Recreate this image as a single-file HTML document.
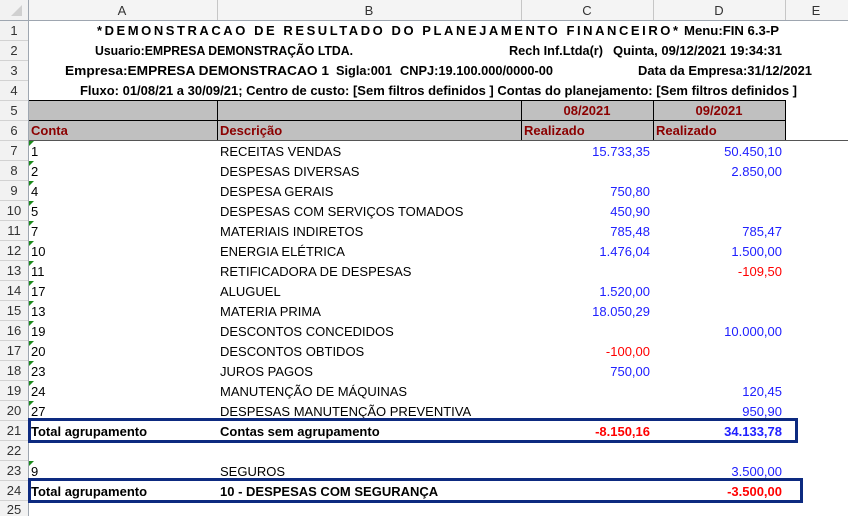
<!DOCTYPE html>
<html><head><meta charset="utf-8"><style>
html,body{margin:0;padding:0;background:#fff;width:848px;height:516px;overflow:hidden}
svg{display:block}
text{font-family:"Liberation Sans",Arial,sans-serif;font-size:13px}
.b{font-weight:bold}
.dr{fill:#8b0000;font-weight:bold}
.bl{fill:#2020ff}
.rd{fill:#ff0000}
.rn{fill:#333;font-size:13px}
</style></head><body>
<svg width="848" height="516" viewBox="0 0 848 516" xmlns="http://www.w3.org/2000/svg">
<rect x="0" y="0" width="848" height="20" fill="#f4f4f4"/>
<rect x="0" y="0" width="28" height="516" fill="#f2f2f2"/>
<line x1="0" y1="20.5" x2="848" y2="20.5" stroke="#9ea6b0"/>
<line x1="28.5" y1="0" x2="28.5" y2="516" stroke="#9ea6b0"/>
<g stroke="#c6c6c6">
<line x1="217.5" y1="0" x2="217.5" y2="20"/><line x1="521.5" y1="0" x2="521.5" y2="20"/><line x1="653.5" y1="0" x2="653.5" y2="20"/><line x1="785.5" y1="0" x2="785.5" y2="20"/>
</g>
<polygon points="22,5 22,16 11,16" fill="#d0d0d0"/>
<g fill="#333" text-anchor="middle">
<text x="122" y="15">A</text><text x="369" y="15">B</text><text x="587" y="15">C</text><text x="719" y="15">D</text><text x="816" y="15">E</text>
</g>
<g stroke="#d2d2d2">
<line x1="0" y1="40.5" x2="28" y2="40.5"/><line x1="0" y1="60.5" x2="28" y2="60.5"/><line x1="0" y1="80.5" x2="28" y2="80.5"/><line x1="0" y1="100.5" x2="28" y2="100.5"/><line x1="0" y1="120.5" x2="28" y2="120.5"/><line x1="0" y1="140.5" x2="28" y2="140.5"/><line x1="0" y1="160.5" x2="28" y2="160.5"/><line x1="0" y1="180.5" x2="28" y2="180.5"/><line x1="0" y1="200.5" x2="28" y2="200.5"/><line x1="0" y1="220.5" x2="28" y2="220.5"/><line x1="0" y1="240.5" x2="28" y2="240.5"/><line x1="0" y1="260.5" x2="28" y2="260.5"/><line x1="0" y1="280.5" x2="28" y2="280.5"/><line x1="0" y1="300.5" x2="28" y2="300.5"/><line x1="0" y1="320.5" x2="28" y2="320.5"/><line x1="0" y1="340.5" x2="28" y2="340.5"/><line x1="0" y1="360.5" x2="28" y2="360.5"/><line x1="0" y1="380.5" x2="28" y2="380.5"/><line x1="0" y1="400.5" x2="28" y2="400.5"/><line x1="0" y1="420.5" x2="28" y2="420.5"/><line x1="0" y1="440.5" x2="28" y2="440.5"/><line x1="0" y1="460.5" x2="28" y2="460.5"/><line x1="0" y1="480.5" x2="28" y2="480.5"/><line x1="0" y1="500.5" x2="28" y2="500.5"/>
</g>
<g class="rn" text-anchor="middle">
<text x="14" y="35">1</text><text x="14" y="55">2</text><text x="14" y="75">3</text><text x="14" y="95">4</text><text x="14" y="115">5</text><text x="14" y="135">6</text><text x="14" y="155">7</text><text x="14" y="175">8</text><text x="14" y="195">9</text><text x="14" y="215">10</text><text x="14" y="235">11</text><text x="14" y="255">12</text><text x="14" y="275">13</text><text x="14" y="295">14</text><text x="14" y="315">15</text><text x="14" y="335">16</text><text x="14" y="355">17</text><text x="14" y="375">18</text><text x="14" y="395">19</text><text x="14" y="415">20</text><text x="14" y="435">21</text><text x="14" y="455">22</text><text x="14" y="475">23</text><text x="14" y="495">24</text><text x="14" y="514">25</text>
</g>
<g class="b">
<text x="97" y="35" textLength="581" lengthAdjust="spacing">*DEMONSTRACAO DE RESULTADO DO PLANEJAMENTO FINANCEIRO*</text>
<text x="684" y="35" textLength="95" lengthAdjust="spacingAndGlyphs">Menu:FIN 6.3-P</text>
<text x="95" y="55" textLength="258" lengthAdjust="spacingAndGlyphs">Usuario:EMPRESA DEMONSTRAÇÃO LTDA.</text>
<text x="509" y="55" textLength="94" lengthAdjust="spacingAndGlyphs">Rech Inf.Ltda(r)</text>
<text x="613" y="55" textLength="169" lengthAdjust="spacingAndGlyphs">Quinta, 09/12/2021 19:34:31</text>
<text x="65" y="75" textLength="264" lengthAdjust="spacingAndGlyphs">Empresa:EMPRESA DEMONSTRACAO 1</text>
<text x="336" y="75" textLength="56" lengthAdjust="spacingAndGlyphs">Sigla:001</text>
<text x="400" y="75" textLength="153" lengthAdjust="spacingAndGlyphs">CNPJ:19.100.000/0000-00</text>
<text x="638" y="75" textLength="174" lengthAdjust="spacingAndGlyphs">Data da Empresa:31/12/2021</text>
<text x="80" y="95" textLength="717" lengthAdjust="spacingAndGlyphs">Fluxo: 01/08/21 a 30/09/21; Centro de custo: [Sem filtros definidos ] Contas do planejamento: [Sem filtros definidos ]</text>
</g>
<rect x="29" y="100" width="756" height="40" fill="#c0c0c0"/>
<g stroke="#000" fill="none">
<line x1="29" y1="100.5" x2="785" y2="100.5"/>
<line x1="29" y1="120.5" x2="785" y2="120.5"/>
<line x1="217.5" y1="100" x2="217.5" y2="140"/>
<line x1="521.5" y1="100" x2="521.5" y2="140"/>
<line x1="653.5" y1="100" x2="653.5" y2="140"/>
<line x1="785.5" y1="100" x2="785.5" y2="140"/>
</g>
<line x1="29" y1="140.5" x2="848" y2="140.5" stroke="#555"/>
<text class="dr" x="587" y="115" text-anchor="middle">08/2021</text>
<text class="dr" x="719" y="115" text-anchor="middle">09/2021</text>
<text class="dr" x="31" y="135">Conta</text>
<text class="dr" x="220" y="135">Descrição</text>
<text class="dr" x="524" y="135">Realizado</text>
<text class="dr" x="656" y="135">Realizado</text>
<g fill="#1a8a1a">
<polygon points="29,141 34,141 29,146"/><polygon points="29,161 34,161 29,166"/><polygon points="29,181 34,181 29,186"/><polygon points="29,201 34,201 29,206"/><polygon points="29,221 34,221 29,226"/><polygon points="29,241 34,241 29,246"/><polygon points="29,261 34,261 29,266"/><polygon points="29,281 34,281 29,286"/><polygon points="29,301 34,301 29,306"/><polygon points="29,321 34,321 29,326"/><polygon points="29,341 34,341 29,346"/><polygon points="29,361 34,361 29,366"/><polygon points="29,381 34,381 29,386"/><polygon points="29,401 34,401 29,406"/><polygon points="29,461 34,461 29,466"/>
</g>
<g>
<text x="31" y="156">1</text><text x="220" y="156">RECEITAS VENDAS</text>
<text x="31" y="176">2</text><text x="220" y="176">DESPESAS DIVERSAS</text>
<text x="31" y="196">4</text><text x="220" y="196">DESPESA GERAIS</text>
<text x="31" y="216">5</text><text x="220" y="216">DESPESAS COM SERVIÇOS TOMADOS</text>
<text x="31" y="236">7</text><text x="220" y="236">MATERIAIS INDIRETOS</text>
<text x="31" y="256">10</text><text x="220" y="256">ENERGIA ELÉTRICA</text>
<text x="31" y="276">11</text><text x="220" y="276">RETIFICADORA DE DESPESAS</text>
<text x="31" y="296">17</text><text x="220" y="296">ALUGUEL</text>
<text x="31" y="316">13</text><text x="220" y="316">MATERIA PRIMA</text>
<text x="31" y="336">19</text><text x="220" y="336">DESCONTOS CONCEDIDOS</text>
<text x="31" y="356">20</text><text x="220" y="356">DESCONTOS OBTIDOS</text>
<text x="31" y="376">23</text><text x="220" y="376">JUROS PAGOS</text>
<text x="31" y="396">24</text><text x="220" y="396">MANUTENÇÃO DE MÁQUINAS</text>
<text x="31" y="416">27</text><text x="220" y="416">DESPESAS MANUTENÇÃO PREVENTIVA</text>
<text x="31" y="476">9</text><text x="220" y="476">SEGUROS</text>
</g>
<g text-anchor="end">
<text class="bl" x="650" y="156">15.733,35</text><text class="bl" x="782" y="156">50.450,10</text>
<text class="bl" x="782" y="176">2.850,00</text>
<text class="bl" x="650" y="196">750,80</text>
<text class="bl" x="650" y="216">450,90</text>
<text class="bl" x="650" y="236">785,48</text><text class="bl" x="782" y="236">785,47</text>
<text class="bl" x="650" y="256">1.476,04</text><text class="bl" x="782" y="256">1.500,00</text>
<text class="rd" x="782" y="276">-109,50</text>
<text class="bl" x="650" y="296">1.520,00</text>
<text class="bl" x="650" y="316">18.050,29</text>
<text class="bl" x="782" y="336">10.000,00</text>
<text class="rd" x="650" y="356">-100,00</text>
<text class="bl" x="650" y="376">750,00</text>
<text class="bl" x="782" y="396">120,45</text>
<text class="bl" x="782" y="416">950,90</text>
<text class="bl" x="782" y="476">3.500,00</text>
</g>
<g class="b">
<text x="31" y="436">Total agrupamento</text><text x="220" y="436">Contas sem agrupamento</text>
<text x="31" y="496">Total agrupamento</text><text x="220" y="496">10 - DESPESAS COM SEGURANÇA</text>
</g>
<g class="b" text-anchor="end">
<text class="rd" x="650" y="436">-8.150,16</text><text class="bl" x="782" y="436">34.133,78</text>
<text class="rd" x="782" y="496">-3.500,00</text>
</g>
<rect x="29.5" y="419.5" width="767" height="22" fill="none" stroke="#0d2a80" stroke-width="3"/>
<rect x="29.5" y="479.5" width="772" height="22" fill="none" stroke="#0d2a80" stroke-width="3"/>
</svg>
</body></html>
